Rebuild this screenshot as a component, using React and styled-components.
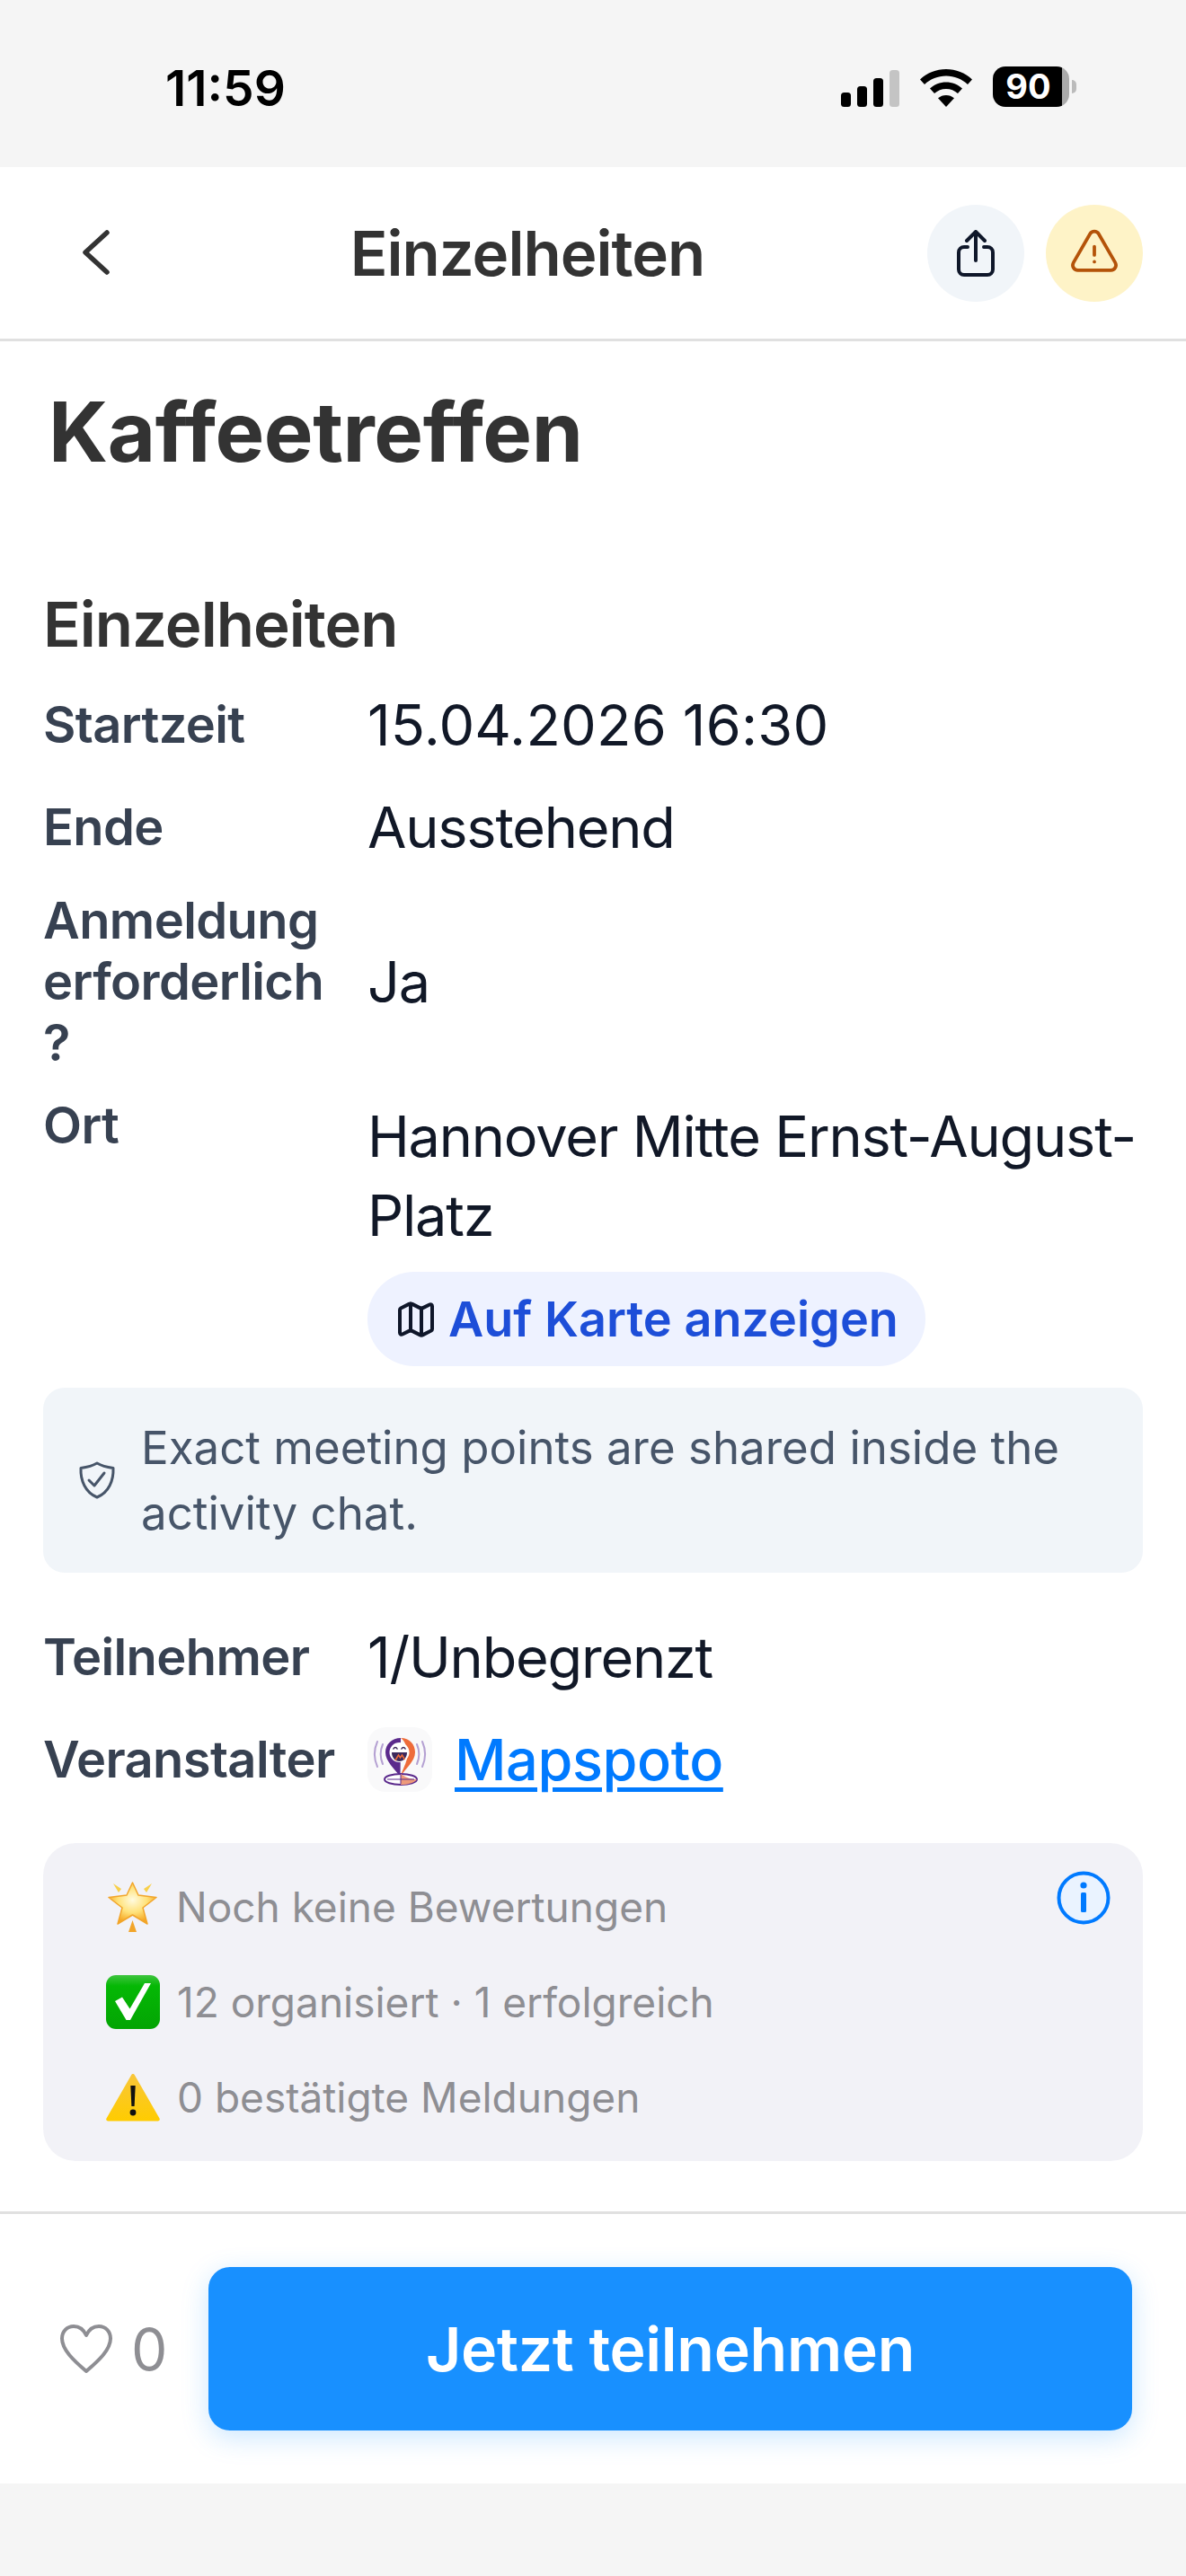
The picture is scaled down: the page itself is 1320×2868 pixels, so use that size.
import React from "react";
import styled, { createGlobalStyle } from "styled-components";
import { Map as MapIcon } from "lucide-react";

const Global = createGlobalStyle`
  html, body { margin: 0; padding: 0; background: #f5f5f5; }
  body { font-family: Inter, "Liberation Sans", sans-serif; -webkit-font-smoothing: antialiased; }
  * { box-sizing: border-box; }
`;

const Page = styled.div`
  width: 1320px;
  height: 2868px;
  display: flex;
  flex-direction: column;
  background: #f5f5f5;
`;

const StatusBar = styled.div`
  height: 186px;
  display: flex;
  align-items: flex-start;
  justify-content: space-between;
  padding: 0 130px 0 184px;
`;
const Time = styled.div`
  font-size: 55px;
  line-height: 64px;
  font-weight: 600;
  color: #000;
  margin-top: 66px;
`;
const StatusIcons = styled.div`
  display: flex;
  align-items: flex-end;
  gap: 23px;
  margin-top: 74px;
`;
const Battery = styled.div`
  position: relative;
  width: 85px;
  height: 45px;
  border-radius: 14px;
  background: linear-gradient(90deg, #000 0 91%, #aaa 91% 100%);
  color: #fff;
  font-size: 38px;
  line-height: 45px;
  font-weight: 700;
  text-align: center;
  padding-right: 6px;
  &::after {
    content: "";
    position: absolute;
    left: 88px;
    top: 15px;
    width: 5px;
    height: 15px;
    border-radius: 0 6px 6px 0;
    background: #bbb;
  }
`;

const Nav = styled.header`
  height: 194px;
  background: #fff;
  border-bottom: 3px solid #e0e0e0;
  display: flex;
  align-items: center;
  padding: 0 48px 0 91px;
`;
const BackButton = styled.button`
  width: 51px;
  border: 0;
  padding: 0;
  background: none;
  display: flex;
  align-items: center;
  margin-top: -2px;
`;
const NavTitle = styled.div`
  flex: 1;
  text-align: center;
  font-size: 69px;
  line-height: 80px;
  letter-spacing: -1px;
  font-weight: 600;
  color: #333;
`;
const NavActions = styled.div`
  display: flex;
  gap: 24px;
`;
const RoundButton = styled.button`
  width: 108px;
  height: 108px;
  border: 0;
  padding: 0;
  border-radius: 50%;
  background: ${(p) => p.$bg};
  display: flex;
  align-items: center;
  justify-content: center;
`;

const Main = styled.main`
  flex: 1;
  background: #fff;
  padding: 0 48px;
  display: flex;
  flex-direction: column;
`;
const Title = styled.h1`
  margin: 41px 0 0 6px;
  font-size: 92px;
  line-height: 120px;
  letter-spacing: -0.4px;
  font-weight: 700;
  color: #333;
`;
const SectionTitle = styled.h2`
  margin: 110px 0 24px;
  font-size: 69px;
  line-height: 88px;
  letter-spacing: -1px;
  font-weight: 600;
  color: #333;
`;
const Rows = styled.div`
  display: flex;
  flex-direction: column;
  gap: 26px;
`;
const Row = styled.div`
  display: flex;
  align-items: ${(p) => (p.$top ? "flex-start" : "center")};
`;
const Label = styled.div`
  width: 320px;
  margin: ${(p) => (p.$top ? "-2px" : "0")} 41px 0 0;
  flex: none;
  font-size: 56px;
  line-height: 68px;
  letter-spacing: -0.6px;
  font-weight: 600;
  color: #374151;
`;
const Value = styled.div`
  font-size: 63px;
  line-height: 88px;
  letter-spacing: ${(p) => (p.$numeric ? "0.2px" : "-1.2px")};
  color: #111827;
  font-weight: 400;
`;
const ValueColumn = styled.div`
  flex: 1;
  min-width: 0;
  display: flex;
  flex-direction: column;
  align-items: flex-start;
`;
const MapPill = styled.button`
  margin-top: 19px;
  height: 105px;
  border: 0;
  border-radius: 52px;
  background: #eef2ff;
  padding: 0 30px;
  display: flex;
  align-items: center;
  gap: 12px;
  font-family: inherit;
  font-size: 54px;
  font-weight: 600;
  color: #1d4ed8;
`;
const InfoBox = styled.div`
  margin: 24px 0 50px;
  height: 206px;
  border-radius: 24px;
  background: #f1f5f9;
  padding: 0 48px 0 39px;
  display: flex;
  align-items: center;
  gap: 28px;
  font-size: 51px;
  line-height: 73px;
  color: #475569;
`;
const OrganizerValue = styled.div`
  display: flex;
  align-items: center;
  gap: 25px;
`;
const LogoTile = styled.div`
  width: 72px;
  height: 72px;
  border-radius: 20px;
  background: #f9f9fa;
  display: flex;
`;
const OrganizerLink = styled.a`
  font-size: 63px;
  line-height: 88px;
  letter-spacing: -0.4px;
  font-weight: 500;
  color: #007aff;
  text-decoration: underline;
  text-decoration-thickness: 5px;
  text-underline-offset: 8px;
`;
const RatingCard = styled.section`
  position: relative;
  margin-top: 49px;
  height: 354px;
  border-radius: 36px;
  background: #f2f2f7;
  padding: 18px 0 0 70px;
  display: flex;
  flex-direction: column;
`;
const RatingRow = styled.div`
  height: 106px;
  display: flex;
  align-items: center;
  gap: 19px;
  font-size: 46px;
  color: #8e8e93;
`;
const InfoButton = styled.button`
  position: absolute;
  top: 31px;
  right: 36px;
  width: 60px;
  height: 60px;
  border: 0;
  padding: 0;
  background: none;
  display: flex;
`;
const Footer = styled.footer`
  height: 303px;
  background: #fff;
  border-top: 3px solid #e0e0e0;
  display: flex;
  align-items: center;
  padding: 0 60px 0 67px;
`;
const Likes = styled.div`
  width: 165px;
  flex: none;
  display: flex;
  align-items: center;
  gap: 21px;
  font-size: 64px;
  font-weight: 400;
  color: #8e8e93;
`;
const JoinButton = styled.button`
  flex: 1;
  height: 182px;
  border: 0;
  border-radius: 24px;
  background: #1890ff;
  box-shadow: 0 8px 30px rgba(24, 144, 255, 0.22);
  color: #fff;
  font-family: inherit;
  font-size: 68px;
  letter-spacing: -0.3px;
  font-weight: 600;
`;
const BottomGap = styled.div`
  height: 103px;
  background: #f5f5f5;
`;

const Signal = () => (
  <svg width="65" height="41" viewBox="0 0 65 41">
    <rect x="0" y="25" width="11" height="16" rx="3.5" fill="#000" />
    <rect x="18" y="18" width="11" height="23" rx="3.5" fill="#000" />
    <rect x="36" y="9" width="11" height="32" rx="3.5" fill="#000" />
    <rect x="54" y="0" width="11" height="41" rx="3.5" fill="#c4c4c4" />
  </svg>
);
const Wifi = () => (
  <svg width="58" height="42" viewBox="0 0 58 42" fill="#000">
    <path d="M29 0c11 0 21 4 29 11.500l-5 5.500C46.500 11 38 7.500 29 7.500S11.500 11 5 17L0 11.500C8 4 18 0 29 0Z" />
    <path d="M29 14.500c6.800 0 13 2.500 18 7l-5 5.500c-3.500-3.100-8-5-13-5s-9.500 1.900-13 5l-5-5.500c5-4.500 11.200-7 18-7Z" />
    <path d="M29 29c3.400 0 6.500 1.200 9 3.300L29 42l-9-9.700c2.500-2.100 5.600-3.300 9-3.300Z" />
  </svg>
);
const ChevronBack = () => (
  <svg width="32" height="50" viewBox="0 0 32 50" fill="none" stroke="#333" strokeWidth="5.500" strokeLinecap="round" strokeLinejoin="round">
    <path d="M28 3 4 25l24 22" />
  </svg>
);
const ShareIcon = () => (
  <svg width="42" height="52" viewBox="0 0 42 52" fill="none" stroke="#0f172a" strokeWidth="4" strokeLinecap="round" strokeLinejoin="round">
    <path d="M12 19H8a6 6 0 0 0-6 6v19a6 6 0 0 0 6 6h26a6 6 0 0 0 6-6V25a6 6 0 0 0-6-6h-4" />
    <path d="M21 34V3M11 12l10-10 10 10" />
  </svg>
);
const WarnIcon = () => (
  <svg width="60" height="60" viewBox="0 0 24 24" fill="none" stroke="#b45309" strokeWidth="1.5" strokeLinecap="round" strokeLinejoin="round">
    <path d="M12 9v3.750m-9.303 3.376c-.866 1.500.217 3.374 1.948 3.374h14.710c1.730 0 2.813-1.874 1.948-3.374L13.949 3.378c-.866-1.500-3.032-1.500-3.898 0L2.697 16.126ZM12 15.750h.007v.008H12v-.008Z" />
  </svg>
);
const ShieldIcon = () => (
  <svg width="42" height="42" viewBox="0 0 42 42" fill="none" stroke="#475569" strokeWidth="3" strokeLinecap="round" strokeLinejoin="round" style={{ flex: "none" }}>
    <path d="M21 2c5 3 11 4.500 18 5.500.6 14-5 27-18 32.500C8 34.500 2.400 21.500 3 7.500 10 6.500 16 5 21 2Z" />
    <path d="m12 21 6 6 11-14" />
  </svg>
);
const Logo = () => (
  <svg width="72" height="72" viewBox="0 0 72 72" fill="none">
    <path d="M17 19c-3 7-3 15 0 22M11 16c-4 9-4 19 0 28M55 19c3 7 3 15 0 22M61 16c4 9 4 19 0 28" stroke="#b4a0d2" strokeWidth="2" strokeLinecap="round" />
    <path d="M37 12c-10 0-17 7-17 16C20 38 30 46 36.500 55Z" fill="#5b2a8c" />
    <path d="M37 12c10 0 16 7 16 16C53 38 42 46 36.500 55c3-9 9.500-20 8-28-1-6-3-12-7.500-15Z" fill="#ee6c3a" />
    <circle cx="35.500" cy="28" r="11" fill="#fff" />
    <path d="M27 28h17c0 6-4 10-8.500 10S27 34 27 28Z" fill="#3d2a5c" />
    <path d="M31 37l3.500-6 2 3 2-3 3 5" stroke="#ee6c3a" strokeWidth="1.500" />
    <path d="M29 24c1-2 3-2 4 0M38 24c1-2 3-2 4 0" stroke="#3d2a5c" strokeWidth="1.600" strokeLinecap="round" />
    <ellipse cx="37" cy="58" rx="18" ry="6" fill="#fff" stroke="#5b2a8c" strokeWidth="2" />
    <path d="M37 52v12c8 0 15-2 18-6-1 0-8 1-18-6Z" fill="#ee9a7a" />
    <path d="M22 58h30M37 53v10" stroke="#5b2a8c" strokeWidth="1" />
  </svg>
);
const StarEmoji = () => (
  <svg width="59" height="59" viewBox="0 0 59 59">
    <defs>
      <radialGradient id="starG" cx="50%" cy="42%" r="55%">
        <stop offset="0" stopColor="#fffbe0" />
        <stop offset="0.55" stopColor="#ffe27a" />
        <stop offset="1" stopColor="#f5a623" />
      </radialGradient>
    </defs>
    <path d="M29.500 2 36 16l20 2.500L41 30l5 18-16.500-10L13 48l5-18L3 18.500 23 16Z" fill="url(#starG)" stroke="#f2a52a" strokeWidth="1.500" strokeLinejoin="round" />
    <path d="M8 3l9 6-3 4ZM51 3l-9 6 3 4Z" fill="#f8d04a" />
    <path d="M29.500 44l4.500 13h-9Z" fill="#f2a52a" />
  </svg>
);
const CheckEmoji = () => (
  <svg width="60" height="60" viewBox="0 0 60 60">
    <defs>
      <linearGradient id="checkG" x1="0" y1="0" x2="0" y2="1">
        <stop offset="0" stopColor="#3fc43f" />
        <stop offset="0.2" stopColor="#05b805" />
        <stop offset="1" stopColor="#03a403" />
      </linearGradient>
    </defs>
    <rect width="60" height="60" rx="11" fill="url(#checkG)" />
    <path d="M10 29l8-4.500 8.500 13L43 9h7L27 50h-4.500Z" fill="#fff" />
  </svg>
);
const WarnEmoji = () => (
  <svg width="60" height="54" viewBox="0 0 60 54">
    <defs>
      <linearGradient id="warnG" x1="0" y1="0" x2="0" y2="1">
        <stop offset="0" stopColor="#f8c63a" />
        <stop offset="1" stopColor="#ffcc00" />
      </linearGradient>
    </defs>
    <path d="M30 1c1 0 1.600.6 2 1.400l27.500 48c.8 1.500 0 3-1.800 3H2.300C.5 53.400-.3 51.900.5 50.400L28 2.400C28.400 1.600 29 1 30 1Z" fill="url(#warnG)" />
    <path d="M27.300 14h5.400l-1.100 23h-3.200Z" fill="#111" />
    <circle cx="30" cy="44" r="3.400" fill="#111" />
  </svg>
);
const InfoCircle = () => (
  <svg width="60" height="60" viewBox="0 0 60 60">
    <circle cx="30" cy="30" r="27.500" fill="#eaf3ff" stroke="#007aff" strokeWidth="4" />
    <circle cx="30" cy="16" r="3.600" fill="#007aff" />
    <rect x="27" y="24" width="6" height="22" rx="1.500" fill="#007aff" />
  </svg>
);
const HeartIcon = () => (
  <svg width="58" height="54" viewBox="0 0 58 54" fill="none" stroke="#8e8e93" strokeWidth="4" strokeLinejoin="round">
    <path d="M29 12C26 5.500 21 2 15 2 7.500 2 2 8 2 15.500 2 28 15 40 29 52c14-12 27-24 27-36.500C56 8 50.500 2 43 2c-6 0-11 3.500-14 10Z" />
  </svg>
);

export default function App() {
  return (
    <Page>
      <Global />
      <StatusBar>
        <Time>11:59</Time>
        <StatusIcons>
          <Signal />
          <Wifi />
          <Battery>90</Battery>
        </StatusIcons>
      </StatusBar>
      <Nav>
        <BackButton aria-label="Zurück"><ChevronBack /></BackButton>
        <NavTitle>Einzelheiten</NavTitle>
        <NavActions>
          <RoundButton $bg="#f1f5f9" aria-label="Teilen"><ShareIcon /></RoundButton>
          <RoundButton $bg="#fef3c7" aria-label="Melden"><WarnIcon /></RoundButton>
        </NavActions>
      </Nav>
      <Main>
        <Title>Kaffeetreffen</Title>
        <SectionTitle>Einzelheiten</SectionTitle>
        <Rows>
          <Row><Label>Startzeit</Label><Value $numeric>15.04.2026 16:30</Value></Row>
          <Row><Label>Ende</Label><Value>Ausstehend</Value></Row>
          <Row><Label>Anmeldung erforderlich ?</Label><Value>Ja</Value></Row>
          <Row $top>
            <Label $top>Ort</Label>
            <ValueColumn>
              <Value>Hannover Mitte Ernst-August-Platz</Value>
              <MapPill><MapIcon size={48} color="#0f172a" />Auf Karte anzeigen</MapPill>
            </ValueColumn>
          </Row>
        </Rows>
        <InfoBox>
          <ShieldIcon />
          <span>Exact meeting points are shared inside the activity chat.</span>
        </InfoBox>
        <Rows>
          <Row><Label>Teilnehmer</Label><Value>1/Unbegrenzt</Value></Row>
          <Row>
            <Label>Veranstalter</Label>
            <OrganizerValue>
              <LogoTile><Logo /></LogoTile>
              <OrganizerLink>Mapspoto</OrganizerLink>
            </OrganizerValue>
          </Row>
        </Rows>
        <RatingCard>
          <RatingRow><StarEmoji />Noch keine Bewertungen</RatingRow>
          <RatingRow><CheckEmoji />12 organisiert · 1 erfolgreich</RatingRow>
          <RatingRow><WarnEmoji />0 bestätigte Meldungen</RatingRow>
          <InfoButton aria-label="Info"><InfoCircle /></InfoButton>
        </RatingCard>
      </Main>
      <Footer>
        <Likes><HeartIcon />0</Likes>
        <JoinButton>Jetzt teilnehmen</JoinButton>
      </Footer>
      <BottomGap />
    </Page>
  );
}
